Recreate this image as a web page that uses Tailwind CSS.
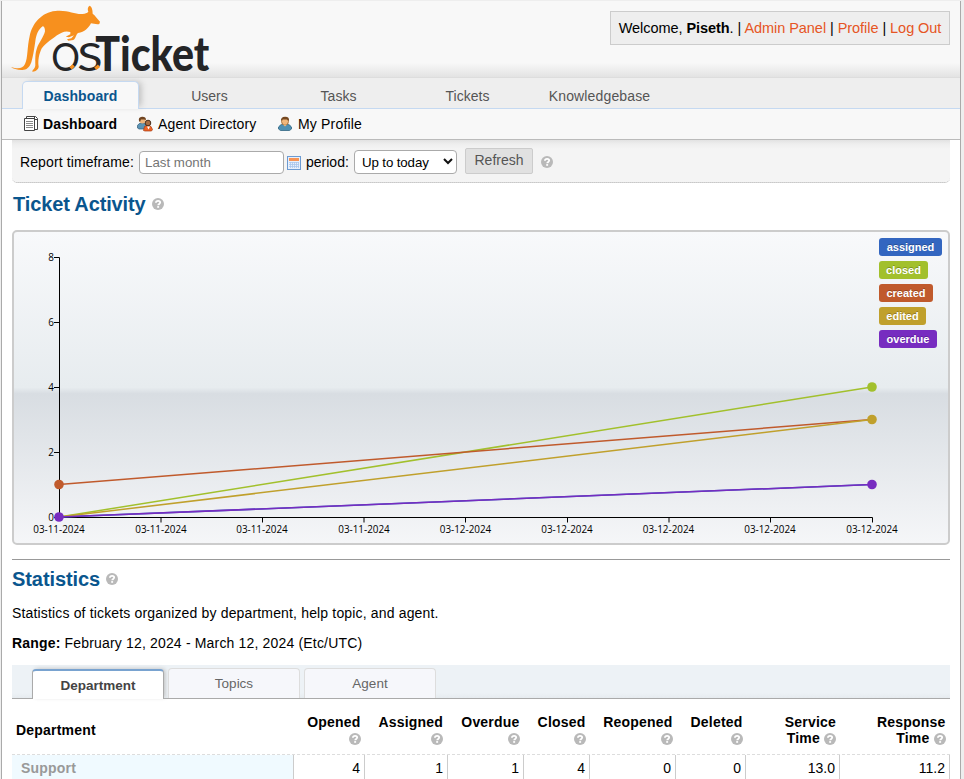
<!DOCTYPE html>
<html lang="en">
<head>
<meta charset="utf-8">
<title>osTicket Staff Control Panel</title>
<script src="https://cdn.jsdelivr.net/npm/@tailwindcss/browser@4"></script>
</head>
<body class="h-[779px] overflow-hidden bg-[#eee] pt-px pl-px font-['Liberation_Sans',Arial,sans-serif] text-[14px] leading-[20px] text-black">
<svg class="hidden">
  <symbol id="help" viewBox="0 0 12 12"><circle cx="6" cy="6" r="6" fill="#b9b9b9"/><path d="M3.900 4.700C4 3.300 5 2.800 6.100 2.800c1.200 0 2.100.7 2.100 1.700C8.200 5.900 6.200 5.900 6.200 7.300" fill="none" stroke="#fff" stroke-width="1.800"/><rect x="5.200" y="8.100" width="1.900" height="1.700" fill="#fff"/></symbol>
</svg>
<div class="h-[778px] w-[960px] overflow-hidden border-x border-[#aaa] bg-white">
  <header class="flex h-[77px] justify-between border-b border-[#ddd] bg-[linear-gradient(to_bottom,#f8f8f8_0,#f8f8f8_62px,#e3e3e3_76px)] pr-[10px]">
    <svg class="h-[76px] w-[220px]" viewBox="6 3 660 228">
      <path fill="#f7901e" d="M33 201C52 207 68 207 75 192C84 174 81 142 89 108C97 70 125 37 166 33C204 29 224 44 248 42C256 41 261 39 265 35C262 28 263 19 269 17C276 20 278 31 278 41C286 47 290 54 300 65L298 72C289 74 280 70 273 70C266 84 254 96 234 99C227 104 229 114 220 120L205 122L201 118L214 115L222 106L207 112L197 110L211 103L211 96C195 91 183 98 171 106C154 119 128 136 122 152C115 169 114 188 116 199C116 209 106 216 97 215C98 208 105 207 106 196C106 176 105 162 111 144C116 130 132 109 135 94C135 84 132 79 128 79C115 88 109 103 106 124C102 151 99 170 94 187C88 204 78 211 65 210C51 209 39 207 33 201Z"/>
      <g fill="#242527">
        <text x="154" y="212" font-family="Lato" font-weight="400" font-size="115" textLength="86" lengthAdjust="spacingAndGlyphs">O</text>
        <text x="232" y="212" font-family="Lato" font-weight="400" font-size="115" textLength="76" lengthAdjust="spacingAndGlyphs">S</text>
        <text x="286" y="212" font-family="Lato" font-weight="900" font-size="145" textLength="342" lengthAdjust="spacingAndGlyphs">Ticket</text>
      </g>
      <path d="M212 205l9-9M286 206l11-9" stroke="#f7901e" stroke-width="10"/>
    </svg>
    <div class="mt-[10px] flex h-[34px] w-[340px] items-center justify-center border border-[#ccc] bg-[#eee] text-[14.500px] tracking-[-0.055px] whitespace-pre"><span>Welcome, <b>Piseth</b>. | <a class="text-[#e65524]">Admin Panel</a> | <a class="text-[#e65524]">Profile</a> | <a class="text-[#e65524]">Log Out</a></span></div>
  </header>
  <nav class="flex h-[31px] border-b border-[#c5d9f1] bg-[#eee] pl-[20px] text-center text-[14px] leading-[29px] text-[#555]">
    <a class="mt-[3px] h-[28px] w-[117px] rounded-t-[5px] border border-b-0 border-[#c5d9f1] bg-[#f8f8f8] font-bold tracking-[0.1px] text-[#0a568e] shadow-[4px_-1px_6px_-2px_#bbb]">Dashboard</a>
    <a class="ml-[12px] w-[117px] pt-[4px]">Users</a>
    <a class="ml-[12px] w-[117px] pt-[4px]">Tasks</a>
    <a class="ml-[12px] w-[117px] pt-[4px]">Tickets</a>
    <a class="ml-[12px] w-[123px] pt-[4px] tracking-[0.150px]">Knowledgebase</a>
  </nav>
  <nav class="flex h-[31px] items-center border-b border-[#bbb] bg-[#f8f8f8] pl-[21px]">
    <svg class="mr-[4px] h-[16px] w-[16px]" viewBox="0 0 16 16" fill="#fff" stroke="#444"><path d="M3.500.5h9l2 2v11h-11z"/><path d="M1.500 2.500h10v12h-10z"/><path d="M11.500.5v3h3" fill="none"/><path d="M3 5.500h7M3 7.500h7M3 9.500h7M3 11.500h7" stroke="#888"/></svg>
    <b class="w-[94px] tracking-[0.120px]">Dashboard</b>
    <svg class="mr-[5px] h-[16px] w-[16px]" viewBox="0 0 16 16"><path d="M.5 12V9.500Q1.500 7 5 7t5 3v3H2z" fill="#5b93b4" stroke="#315b78" stroke-width=".7"/><circle cx="5.500" cy="4.500" r="3" fill="#edb47b"/><path d="M2 5Q1 1 5 .7 9 .5 9 4L7 3.500 4 3.500 3 6z" fill="#704522"/><path d="M6.500 14.500l1-4Q11 7.500 14 10.500l1.500 3-1 1.500H8z" fill="#ed6327" stroke="#a63c13" stroke-width=".7"/><circle cx="11" cy="7" r="2.800" fill="#a76d43" stroke="#49301e"/><path d="M10 10.500l1.500 3L13 10.500z" fill="#fff"/></svg>
    <span class="w-[119px] tracking-[0.130px]">Agent Directory</span>
    <svg class="mr-[5px] h-[16px] w-[16px]" viewBox="0 0 16 16"><path d="M1.500 13V11Q3 8 8 8t6.500 3v2l-2 1.500h-9z" fill="#4f90b3" stroke="#326682" stroke-width=".8"/><circle cx="8" cy="5.500" r="3.500" fill="#f1b77c" stroke="#98622d" stroke-width=".8"/><path d="M4 5Q3.500 1 8 .8T12 5L10 3.500 5.500 3.500z" fill="#754820"/><path d="M6 8.500h4L8 10.500z" fill="#f1b77c"/></svg>
    <span class="tracking-[0.180px]">My Profile</span>
  </nav>
  <main class="px-[10px]">
    <form class="flex h-[43px] items-center rounded-b-[5px] border-b border-dotted border-[#bbb] bg-[linear-gradient(to_bottom,#e2e2e2_0,#eee_4px,#f4f4f4_9px)] pb-px pl-[8px]">
      <label class="mt-[2px] w-[119px] tracking-[0.110px] whitespace-nowrap">Report timeframe:</label>
      <input class="mt-[3px] h-[23px] w-[145px] rounded-[4px] border border-[#aaa] bg-white pl-[5px] text-[13.300px] placeholder:text-[#757575]" placeholder="Last month">
      <svg class="mt-[5px] ml-[3px] h-[14px] w-[14px]" viewBox="0 0 14 14"><rect x=".5" y=".5" width="13" height="13" fill="#e8f0fc" stroke="#6c9bd2"/><path d="M2 2h10v3H2z" fill="#f79455"/><path d="M2 6.500h10M2 8.500h10M2 10.500h10M3.500 6v6M5.500 6v6M7.500 6v6M9.500 6v6M11.500 6v6" stroke="#a9c6eb" stroke-width=".8"/></svg>
      <span class="mt-[2px] ml-[5px] w-[48px]">period:</span>
      <span class="mt-[2px] flex h-[24px] w-[103px] items-center justify-between rounded-[4px] border border-[#aaa] bg-white pr-[3px] pl-[7px] text-[13.300px] tracking-[-0.120px]"><span class="mt-[2px]">Up to today</span><svg class="h-[7px] w-[10px]" viewBox="0 0 10 7" fill="none" stroke="#111" stroke-width="2"><path d="M1 1l4 4 4-4"/></svg></span>
      <button class="ml-[8px] h-[26px] w-[68px] rounded-[2px] border border-[#ccc] bg-[#e1e1e1] pb-[2px] text-[14px] leading-[20px] text-[#555]" type="button">Refresh</button>
      <svg class="mt-[3px] ml-[8px] h-[12px] w-[12px]"><use href="#help"/></svg>
    </form>
    <h2 class="flex h-[47px] items-center pb-[5px] pl-px text-[20px] font-bold tracking-[-0.130px] text-[#0a568e]">Ticket Activity<svg class="ml-[6px] h-[12px] w-[12px]"><use href="#help"/></svg></h2>
    <section class="relative h-[315px] w-[938px] rounded-[5px] border-2 border-[#ccc] bg-[linear-gradient(to_bottom,#f8f9fb_0%,#e7ecef_50%,#d8dde2_52%,#f5f6f8_100%)]">
      <svg class="block h-[311px] w-[934px]" viewBox="14 232 934 311" font-family="Open Sans" font-size="9.900">
        <path d="M54 257.500h5.500v260M54 322.500h5M54 387.500h5M54 452.500h5M54 517.500h818.500v5M161 517.500v5M262.500 517.500v5M364 517.500v5M465.500 517.500v5M567.500 517.500v5M669 517.500v5M770.500 517.500v5" fill="none" stroke="#000"/>
        <g text-anchor="end"><text x="54" y="261">8</text><text x="54" y="326">6</text><text x="54" y="391">4</text><text x="54" y="456">2</text><text x="54" y="521">0</text></g>
        <g text-anchor="middle"><text x="59" y="533">03-11-2024</text><text x="161" y="533">03-11-2024</text><text x="262" y="533">03-11-2024</text><text x="364" y="533">03-11-2024</text><text x="465.500" y="533">03-12-2024</text><text x="567" y="533">03-12-2024</text><text x="668.500" y="533">03-12-2024</text><text x="770" y="533">03-12-2024</text><text x="872" y="533">03-12-2024</text></g>
        <g fill="none" stroke-width="1.500"><path d="M59 517L872 484.500" stroke="#3366c0"/><path d="M59 517L872 387" stroke="#a2c02c"/><path d="M59 484.500L872 419.500" stroke="#c05a2c"/><path d="M59 517L872 419.500" stroke="#c0a02c"/><path d="M59 517L872 484.500" stroke="#772cc0"/></g>
        <circle cx="872" cy="387" r="4.800" fill="#a2c02c"/><circle cx="59" cy="484.500" r="4.800" fill="#c05a2c"/><circle cx="872" cy="419.500" r="4.800" fill="#c0a02c"/><circle cx="59" cy="517" r="4.800" fill="#772cc0"/><circle cx="872" cy="484.500" r="4.800" fill="#772cc0"/>
      </svg>
      <div class="absolute top-[6px] left-[865px] flex flex-col items-start gap-[5px] text-[11px] leading-[18px] font-bold text-white text-shadow-[0_-1px_0_rgb(0_0_0/0.25)]">
        <span class="w-[63px] rounded-[3px] bg-[#3366c0] text-center">assigned</span>
        <span class="w-[49px] rounded-[3px] bg-[#a2c02c] text-center">closed</span>
        <span class="w-[54px] rounded-[3px] bg-[#c05a2c] text-center">created</span>
        <span class="w-[47px] rounded-[3px] bg-[#c0a02c] text-center">edited</span>
        <span class="w-[58px] rounded-[3px] bg-[#772cc0] text-center">overdue</span>
      </div>
    </section>
    <hr class="mt-[14px] border-[#999]">
    <h2 class="flex h-[38px] items-center text-[20px] font-bold tracking-[-0.080px] text-[#0a568e]">Statistics<svg class="ml-[6px] h-[12px] w-[12px]"><use href="#help"/></svg></h2>
    <p class="mt-[5px] h-[30px] tracking-[0.160px] whitespace-nowrap">Statistics of tickets organized by department, help topic, and agent.</p>
    <p class="h-[32px] tracking-[0.170px] whitespace-nowrap"><b>Range:</b> February 12, 2024 - March 12, 2024 (Etc/UTC)</p>
    <div class="flex h-[34px] items-end gap-[4px] border-b border-[#aaa] bg-[linear-gradient(to_bottom,#edf2f6_0,#edf2f6_28px,#e6ebef_33px)] pl-[20px] text-center text-[13.500px] text-[#666]">
      <a class="-mb-px h-[30px] w-[132px] rounded-t-[4px] border border-t-2 border-b-0 border-[#aaa] border-t-[#79a3d0] bg-white pt-[5px] font-bold text-[#444] shadow-[2px_-1px_4px_-1px_#bbb]">Department</a>
      <a class="h-[30px] w-[132px] rounded-t-[4px] border border-b-0 border-[#ddd] bg-[#f6f7fb] pt-[5px]">Topics</a>
      <a class="h-[30px] w-[132px] rounded-t-[4px] border border-b-0 border-[#ddd] bg-[#f6f7fb] pt-[5px]">Agent</a>
    </div>
    <div class="grid h-[56px] grid-cols-[282px_71px_83px_76px_66px_86px_70px_94px_109px] border-b border-dashed border-[#ddd] pt-[15px] text-right leading-[16px] font-bold tracking-[0.200px]">
      <div class="pt-[8px] pl-[4px] text-left">Department</div>
      <div class="flex flex-col items-end pr-[4.500px]">Opened<svg class="mt-[3px] h-[12px] w-[12px]"><use href="#help"/></svg></div>
      <div class="flex flex-col items-end pr-[5px]">Assigned<svg class="mt-[3px] h-[12px] w-[12px]"><use href="#help"/></svg></div>
      <div class="flex flex-col items-end pr-[4.500px]">Overdue<svg class="mt-[3px] h-[12px] w-[12px]"><use href="#help"/></svg></div>
      <div class="flex flex-col items-end pr-[4.500px]">Closed<svg class="mt-[3px] h-[12px] w-[12px]"><use href="#help"/></svg></div>
      <div class="flex flex-col items-end pr-[3.500px]">Reopened<svg class="mt-[3px] h-[12px] w-[12px]"><use href="#help"/></svg></div>
      <div class="flex flex-col items-end pr-[3.500px]">Deleted<svg class="mt-[3px] h-[12px] w-[12px]"><use href="#help"/></svg></div>
      <div class="flex flex-col items-end pr-[4px]">Service<span class="flex gap-[4px]">Time<svg class="mt-[3px] h-[12px] w-[12px]"><use href="#help"/></svg></span></div>
      <div class="flex flex-col items-end pr-[3.500px]">Response<span class="flex gap-[4px]">Time<svg class="mt-[3px] h-[12px] w-[12px]"><use href="#help"/></svg></span></div>
    </div>
    <div class="grid h-[28px] grid-cols-[282px_71px_83px_76px_66px_86px_70px_94px_110px] text-right leading-[27px] *:border-r *:border-[#ccc] *:pr-[4px]">
      <div class="bg-[#f0faff] pl-[9px] text-left font-bold tracking-[0.200px] text-[#999]">Support</div>
      <div>4</div><div>1</div><div>1</div><div>4</div><div>0</div><div>0</div><div>13.0</div><div>11.2</div>
    </div>
  </main>
</div>
</body>
</html>
